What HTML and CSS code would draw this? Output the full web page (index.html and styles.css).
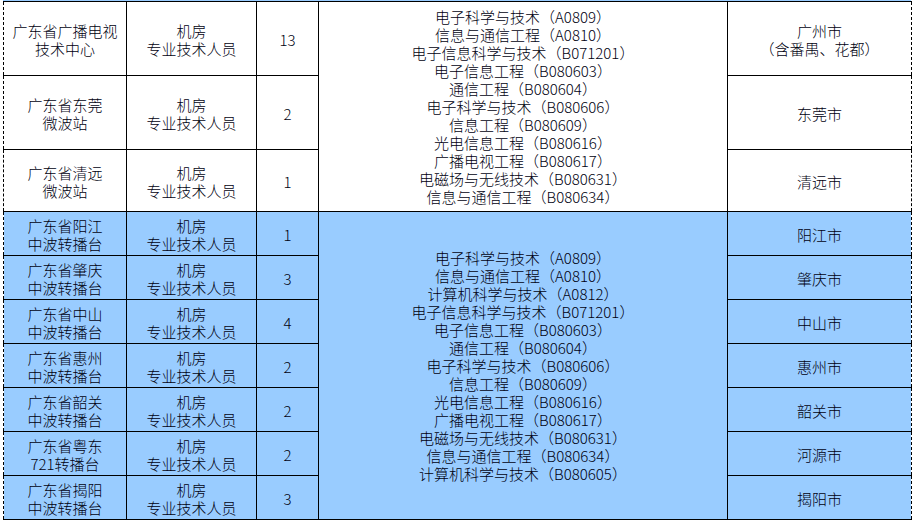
FILE: index.html
```html
<!DOCTYPE html>
<html lang="zh-CN">
<head>
<meta charset="utf-8">
<title>岗位表</title>
<link rel="stylesheet" href="styles.css">
</head>
<body>
<div class="sheet">
  <div class="top-strip"></div>
  <table class="grid">
    <colgroup>
      <col class="c-unit">
      <col class="c-post">
      <col class="c-num">
      <col class="c-major">
      <col class="c-city">
    </colgroup>
    <tbody>
      <tr class="r-tall">
        <td>广东省广播电视<br>技术中心</td>
        <td>机房<br>专业技术人员</td>
        <td>13</td>
        <td rowspan="3" class="major">电子科学与技术（A0809）<br>信息与通信工程（A0810）<br>电子信息科学与技术（B071201）<br>电子信息工程（B080603）<br>通信工程（B080604）<br>电子科学与技术（B080606）<br>信息工程（B080609）<br>光电信息工程（B080616）<br>广播电视工程（B080617）<br>电磁场与无线技术（B080631）<br>信息与通信工程（B080634）</td>
        <td>广州市<br>（含番禺、花都）</td>
      </tr>
      <tr class="r-tall">
        <td>广东省东莞<br>微波站</td>
        <td>机房<br>专业技术人员</td>
        <td>2</td>
        <td>东莞市</td>
      </tr>
      <tr class="r-mid group-end">
        <td>广东省清远<br>微波站</td>
        <td>机房<br>专业技术人员</td>
        <td>1</td>
        <td>清远市</td>
      </tr>
      <tr class="r-blue">
        <td>广东省阳江<br>中波转播台</td>
        <td>机房<br>专业技术人员</td>
        <td>1</td>
        <td rowspan="7" class="major">电子科学与技术（A0809）<br>信息与通信工程（A0810）<br>计算机科学与技术（A0812）<br>电子信息科学与技术（B071201）<br>电子信息工程（B080603）<br>通信工程（B080604）<br>电子科学与技术（B080606）<br>信息工程（B080609）<br>光电信息工程（B080616）<br>广播电视工程（B080617）<br>电磁场与无线技术（B080631）<br>信息与通信工程（B080634）<br>计算机科学与技术（B080605）</td>
        <td>阳江市</td>
      </tr>
      <tr class="r-blue">
        <td>广东省肇庆<br>中波转播台</td>
        <td>机房<br>专业技术人员</td>
        <td>3</td>
        <td>肇庆市</td>
      </tr>
      <tr class="r-blue">
        <td>广东省中山<br>中波转播台</td>
        <td>机房<br>专业技术人员</td>
        <td>4</td>
        <td>中山市</td>
      </tr>
      <tr class="r-blue">
        <td>广东省惠州<br>中波转播台</td>
        <td>机房<br>专业技术人员</td>
        <td>2</td>
        <td>惠州市</td>
      </tr>
      <tr class="r-blue">
        <td>广东省韶关<br>中波转播台</td>
        <td>机房<br>专业技术人员</td>
        <td>2</td>
        <td>韶关市</td>
      </tr>
      <tr class="r-blue">
        <td>广东省粤东<br>721转播台</td>
        <td>机房<br>专业技术人员</td>
        <td>2</td>
        <td>河源市</td>
      </tr>
      <tr class="r-blue">
        <td>广东省揭阳<br>中波转播台</td>
        <td>机房<br>专业技术人员</td>
        <td>3</td>
        <td>揭阳市</td>
      </tr>
    </tbody>
  </table>
</div>
</body>
</html>
```

FILE: styles.css
```css
html, body {
  margin: 0;
  padding: 0;
  background: #ffffff;
}

.sheet {
  width: 914px;
  height: 523px;
  overflow: hidden;
}

.top-strip {
  height: 1px;
  margin-left: 3px;
  width: 908px;
  background: #99ccff;
}

.grid {
  margin-left: 3px;
  border-collapse: collapse;
  table-layout: fixed;
  width: 909px;
  font-family: "Noto Sans CJK SC", "Noto Sans", sans-serif;
  font-weight: 300;
  font-size: 15px;
  line-height: 18px;
  color: #000010;
}

.c-unit { width: 123px; }
.c-post { width: 130px; }
.c-num { width: 62px; }
.c-major { width: 409px; }
.c-city { width: 184px; }

.grid td {
  border: 1px solid #000;
  text-align: center;
  vertical-align: middle;
  padding: 2px 0 0 0;
  white-space: nowrap;
  overflow: hidden;
}

.grid td:first-child {
  border-left: 1px dashed #000;
}

.grid td:last-child {
  border-right: 1px dashed #000;
}

.grid td.major {
  padding-top: 0;
}

.r-tall { height: 74px; }
.r-mid { height: 62px; }
.r-blue { height: 44px; }

.r-blue td {
  background: #99ccff;
}

.group-end td {
  border-bottom: 1px dashed #000;
}

.grid tr.r-tall:first-child td.major {
  border-bottom: 1px dashed #000;
}
```
